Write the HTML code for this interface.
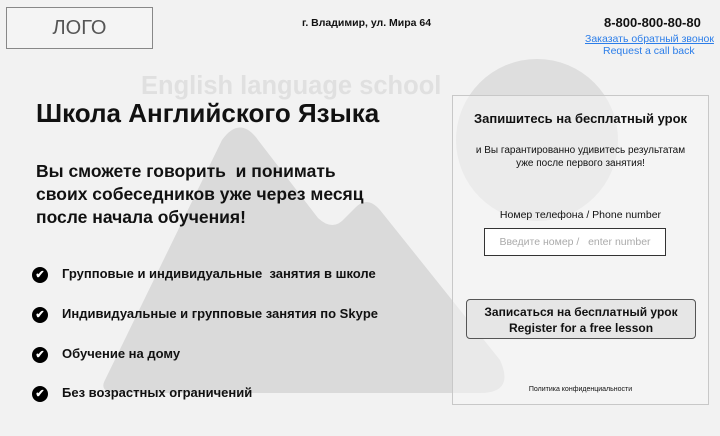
<!DOCTYPE html>
<html><head><meta charset="utf-8"><style>
*{margin:0;padding:0;box-sizing:border-box}
body{width:720px;height:436px;background:#f2f2f2;font-family:"Liberation Sans",Arial,sans-serif;position:relative;overflow:hidden;color:#111}
.a{position:absolute}
svg{position:absolute;left:0;top:0}
.c{display:inline-block;width:16px;height:16px;border-radius:50%;background:#000;color:#fff;font-size:11px;text-align:center;line-height:16px;vertical-align:middle;margin-right:14px}
</style></head><body>
<svg width="720" height="436">
<circle cx="537" cy="140" r="81" fill="#dedede"/>
<path d="M105,380 L222,140 Q240,115 258,140 L318,218 Q333,232 345,218 L355,208 Q367,195 380,210 L500,360 Q515,393 480,393 L120,393 Q98,393 105,380 Z" fill="#dadada"/>
</svg>
<div class="a" style="left:6px;top:7px;width:147px;height:42px;border:1px solid #888;background:#f4f4f4;font-size:20px;color:#555;text-align:center;line-height:40px">ЛОГО</div>
<div class="a" style="left:302px;top:17px;font-size:10.5px;font-weight:bold">г. Владимир, ул. Мира 64</div>
<div class="a" style="left:604px;top:15px;font-size:13px;font-weight:bold">8-800-800-80-80</div>
<div class="a" style="left:585px;top:33px;font-size:10.5px;color:#2b7de9;text-decoration:underline">Заказать обратный звонок</div>
<div class="a" style="left:603px;top:45px;font-size:10.5px;color:#2b7de9">Request a call back</div>
<div class="a" style="left:141px;top:72px;font-size:25.5px;font-weight:bold;color:#e0e0e0">English language school</div>
<div class="a" style="left:36px;top:98px;font-size:26px;font-weight:bold">Школа Английского Языка</div>
<div class="a" style="left:36px;top:160px;font-size:17.5px;font-weight:bold;line-height:23px">Вы сможете говорить&nbsp; и понимать<br>своих собеседников уже через месяц<br>после начала обучения!</div>
<div class="a" style="left:32px;top:264px;font-size:13px;font-weight:bold;line-height:20px">
<div style="height:40px"><span class="c">✔</span>Групповые и индивидуальные&nbsp; занятия в школе</div>
<div style="height:40px"><span class="c">✔</span>Индивидуальные и групповые занятия по Skype</div>
<div style="height:39px"><span class="c">✔</span>Обучение на дому</div>
<div><span class="c">✔</span>Без возрастных ограничений</div>
</div>
<div class="a" style="left:452px;top:95px;width:257px;height:310px;border:1px solid #c8c8c8;background:rgba(245,245,245,0.55)">
<div style="position:absolute;left:0;right:0;top:15px;text-align:center;font-size:13px;font-weight:bold">Запишитесь на бесплатный урок</div>
<div style="position:absolute;left:0;right:0;top:48px;text-align:center;font-size:10px;line-height:13px">и Вы гарантированно удивитесь результатам<br>уже после первого занятия!</div>
<div style="position:absolute;left:0;right:0;top:113px;text-align:center;font-size:10.5px">Номер телефона / Phone number</div>
<div style="position:absolute;left:31px;top:132px;width:182px;height:28px;border:1px solid #333;background:#fff;font-size:10.5px;color:#aaa;text-align:center;line-height:26px">Введите номер /&nbsp;&nbsp; enter number</div>
<div style="position:absolute;left:13px;top:203px;width:230px;height:40px;border:1px solid #555;border-radius:4px;background:#e6e6e6;text-align:center;font-size:12px;font-weight:bold;line-height:16px;padding-top:4px">Записаться на бесплатный урок<br>Register for a free lesson</div>
<div style="position:absolute;left:0;right:0;top:290px;text-align:center;font-size:7px">Политика конфиденциальности</div>
</div>
</body></html>
